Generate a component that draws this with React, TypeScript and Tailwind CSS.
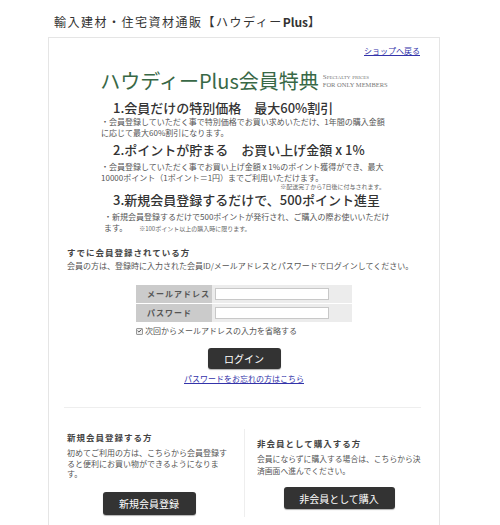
import { Check } from 'lucide-react'

const jp = "font-['Noto_Sans_CJK_JP','Noto_Sans',sans-serif]"

function Benefit({ title, lines, gap, note }: { title: string; lines: string[]; gap: string; note?: React.ReactNode }) {
  return (
    <div>
      <h3 className="pl-[12px] text-[13px] leading-[15px] font-medium text-[#333]">{title}</h3>
      <p className={`${gap} text-[8px] leading-[10.5px] text-[#555] whitespace-nowrap`}>
        {lines.map((l, i) => (
          <span key={i} className="block">{l}</span>
        ))}
      </p>
      {note}
    </div>
  )
}

function DarkButton({ children, className }: { children: React.ReactNode; className?: string }) {
  return (
    <button
      className={`flex items-center justify-center rounded-[3px] bg-[#333] text-[10px] text-white shadow-[0_1px_1px_rgba(0,0,0,0.3)] ${className ?? ''}`}
    >
      {children}
    </button>
  )
}

export default function App() {
  return (
    <div className={`min-h-[525px] w-[500px] bg-white text-[#444] ${jp}`}>
      <div className="h-[37px] pl-[54px] pt-[14px]">
        <h1 className="text-[12px] leading-[16px] tracking-[1.5px] text-[#333]">
          輸入建材・住宅資材通販【ハウディー<span className="font-bold tracking-normal">Plus</span>】
        </h1>
      </div>

      <div className="ml-[48px] w-[392px] min-h-[488px] border-x border-t border-[#e5e5e5] px-[18px] pb-[10px]">
        <div className="mt-[8px] text-right text-[8px] leading-[10px]">
          <a href="#" className="mr-[1px] text-[#3333aa] underline">ショップへ戻る</a>
        </div>

        <div className="mt-[13px] flex items-end justify-center gap-[4px]">
          <h2 className="text-[20px] leading-[24px] text-[#386846]">ハウディーPlus会員特典</h2>
          <div className="mb-[5px] font-['Liberation_Serif',serif] text-[7px] leading-[7px] text-[#777]">
            <div className="[font-variant:small-caps]">Specialty prices</div>
            <div className="text-[6.5px]">FOR ONLY MEMBERS</div>
          </div>
        </div>

        <div className="mx-auto mt-[7px] w-[286px]">
          <Benefit
            gap="mt-[2px]"
            title="1.会員だけの特別価格　最大60%割引"
            lines={['・会員登録していただく事で特別価格でお買い求めいただけ、1年間の購入金額', 'に応じて最大60%割引になります。']}
          />
          <div className="mt-[4px]">
            <Benefit
              gap="mt-[5px]"
              title="2.ポイントが貯まる　お買い上げ金額 x 1%"
              lines={['・会員登録していただく事でお買い上げ金額 x 1%のポイント獲得ができ、最大', '10000ポイント（1ポイント＝1円）までご利用いただけます。']}
              note={<p className="text-right text-[6px] leading-[7px] text-[#666] pr-[2px]">※配送完了から7日後に付与されます。</p>}
            />
          </div>
          <div className="mt-[2px]">
            <h3 className="pl-[12px] text-[13px] leading-[15px] font-medium text-[#333]">3.新規会員登録するだけで、500ポイント進呈</h3>
            <p className="mt-[5px] pl-[3px] text-[8px] leading-[10.5px] text-[#555] whitespace-nowrap">
              <span className="block">・新規会員登録するだけで500ポイントが発行され、ご購入の際お使いいただけ</span>
              <span className="block">
                ます。<span className="ml-[12px] text-[6px] text-[#666]">※100ポイント以上の購入時に限ります。</span>
              </span>
            </p>
          </div>
        </div>

        <h4 className="mt-[12px] text-[8.5px] leading-[12px] font-bold tracking-[1px] text-[#444]">すでに会員登録されている方</h4>
        <p className="mt-[2px] text-[8px] leading-[12px] whitespace-nowrap text-[#555]">
          会員の方は、登録時に入力された会員ID/メールアドレスとパスワードでログインしてください。
        </p>

        <div className="mx-auto mt-[13px] w-[216px]">
          <div className="flex flex-col gap-[1px] bg-white">
            {['メールアドレス', 'パスワード'].map(label => (
              <div key={label} className="flex h-[18px]">
                <div className="flex w-[76px] items-center bg-[#cbcbcb] pl-[11px] text-[8px] font-bold tracking-[1px] text-[#555]">
                  {label}
                </div>
                <div className="flex flex-1 items-center bg-[#ececec] pl-[3px]">
                  <input className="h-[12px] w-[114px] border border-[#c8c8c8] bg-white" />
                </div>
              </div>
            ))}
          </div>
          <label className="mt-[3px] flex items-center gap-[2px] text-[8px] leading-[12px] text-[#555]">
            <span className="flex h-[7px] w-[7px] items-center justify-center rounded-[1px] border border-[#999] bg-[#eee]">
              <Check size={6} strokeWidth={4} className="text-[#333]" />
            </span>
            次回からメールアドレスの入力を省略する
          </label>
        </div>

        <DarkButton className="mx-auto mt-[11px] h-[21px] w-[73px]">ログイン</DarkButton>
        <div className="mt-[5px] text-center text-[8px] leading-[10px]">
          <a href="#" className="text-[#3333aa] underline">パスワードをお忘れの方はこちら</a>
        </div>

        <hr className="-ml-[3px] mt-[23px] border-t border-[#eeeeee]" />

        <div className="mt-[21px] flex">
          <div className="mr-[13px] w-[164px] pt-[2px]">
            <h4 className="text-[8.5px] leading-[12px] font-bold tracking-[1px] text-[#444]">新規会員登録する方</h4>
            <p className="mt-[5px] text-[8px] leading-[10.5px] whitespace-nowrap text-[#555]">
              <span className="block">初めてご利用の方は、こちらから会員登録す</span>
              <span className="block">ると便利にお買い物ができるようになりま</span>
              <span className="block">す。</span>
            </p>
            <DarkButton className="mx-auto mt-[12px] h-[23px] w-[93px]">新規会員登録</DarkButton>
          </div>
          <div className="flex-1 border-l border-[#eeeeee] pl-[12px] pt-[8px] pb-[8px]">
            <h4 className="text-[8.5px] leading-[12px] font-bold tracking-[1px] text-[#444]">非会員として購入する方</h4>
            <p className="mt-[4px] text-[7.8px] leading-[12px] whitespace-nowrap text-[#555]">
              <span className="block">会員にならずに購入する場合は、こちらから決</span>
              <span className="block">済画面へ進んでください。</span>
            </p>
            <DarkButton className="mx-auto mt-[10px] h-[22px] w-[111px]">非会員として購入</DarkButton>
          </div>
        </div>
      </div>
    </div>
  )
}
